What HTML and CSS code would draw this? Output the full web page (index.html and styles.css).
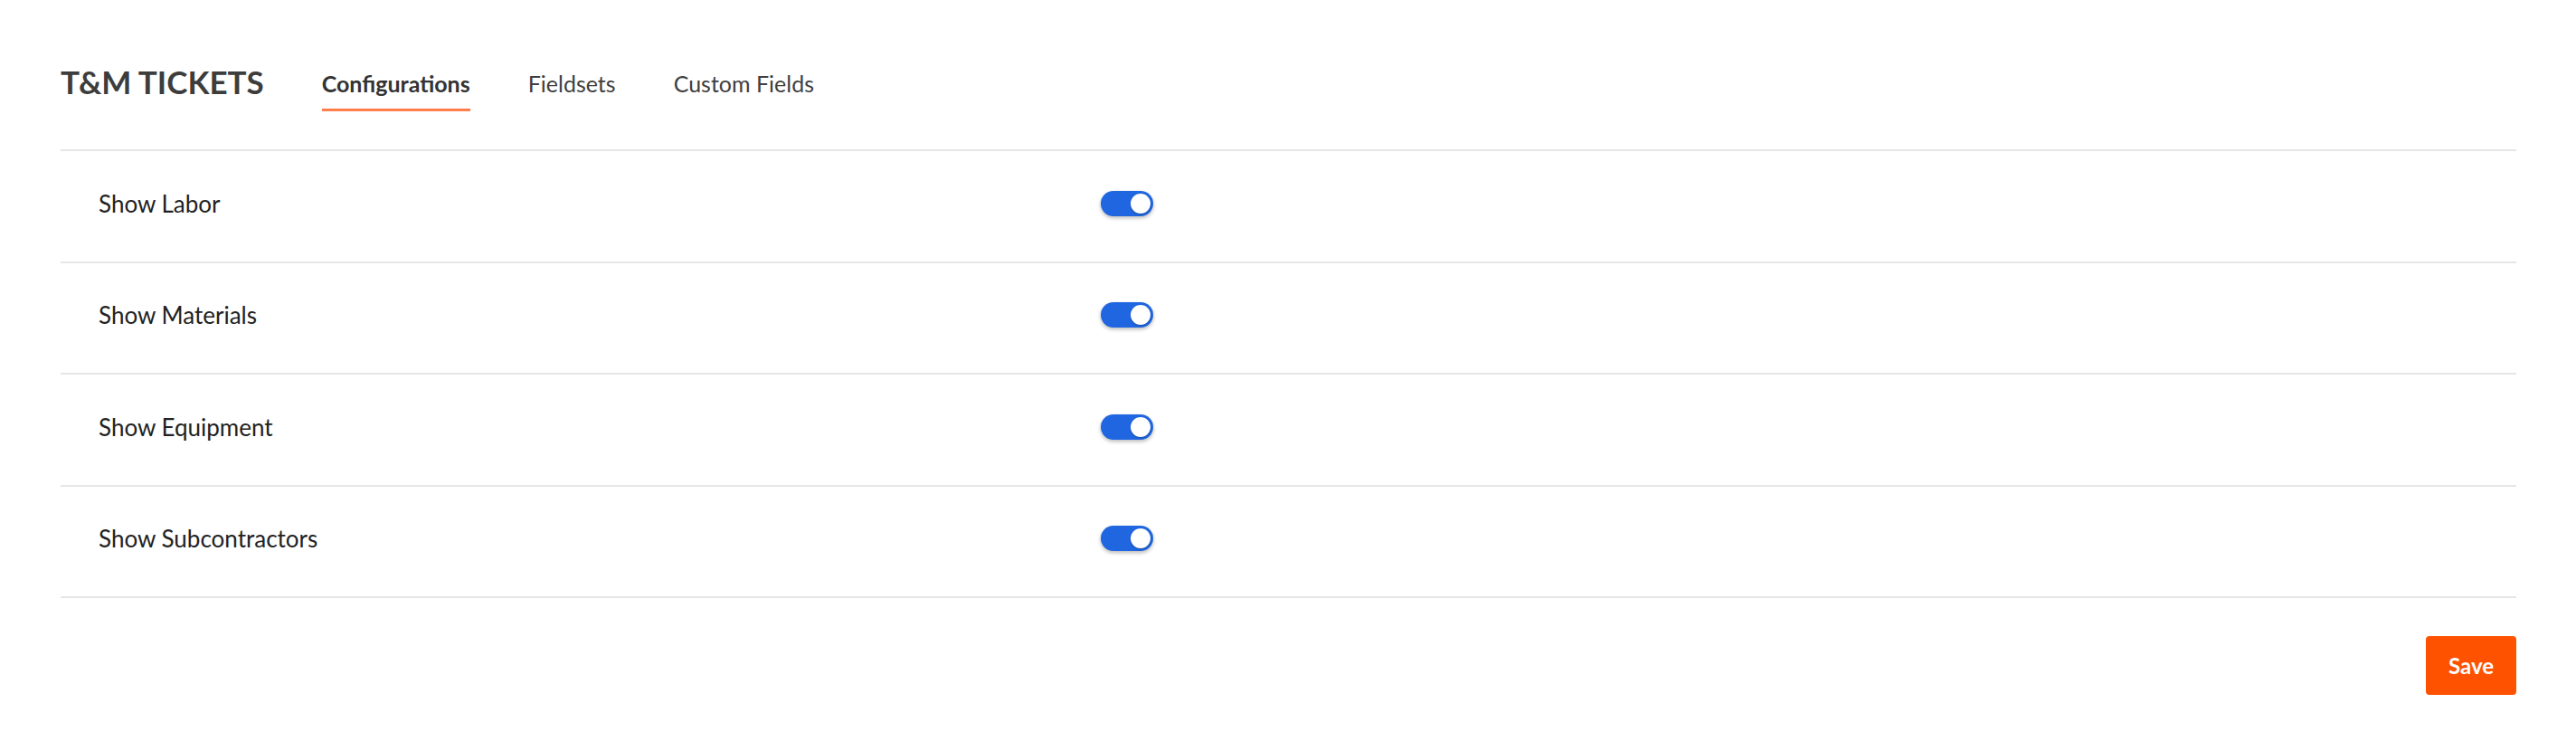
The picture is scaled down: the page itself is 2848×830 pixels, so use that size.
FILE: index.html
```html
<!DOCTYPE html>
<html>
<head>
	<meta charset="UTF-8">
	<title>T&amp;M Tickets</title>
	<link rel="stylesheet" href="styles.css">
</head>
<body>
	<div class="page">
		<div class="header">
			<h1 class="title">T&amp;M TICKETS</h1>
			<ul class="tabs">
				<li class="active">Configurations</li>
				<li>Fieldsets</li>
				<li>Custom Fields</li>
			</ul>
		</div>
		<ul class="settings">
			<li>
				<span class="label">Show Labor</span>
				<span class="switch on"><i></i></span>
			</li>
			<li>
				<span class="label">Show Materials</span>
				<span class="switch on"><i></i></span>
			</li>
			<li>
				<span class="label">Show Equipment</span>
				<span class="switch on"><i></i></span>
			</li>
			<li>
				<span class="label">Show Subcontractors</span>
				<span class="switch on"><i></i></span>
			</li>
		</ul>
		<div class="actions">
			<button class="save">Save</button>
		</div>
	</div>
</body>
</html>
```

FILE: styles.css
```css
*{margin: 0;padding: 0;box-sizing: border-box;}
li{list-style-type: none;}
body{background: #FFFFFF;font-family: Lato, "Noto Sans", sans-serif;color: #222222;}
.page{padding: 0 66px 0 67px;}

/* 顶部标题和标签 */
.header{display: flex;align-items: flex-start;padding-top: 68px;padding-bottom: 42px;}
.title{font-size: 35px;line-height: 44px;font-weight: 700;color: #3d3d3d;margin-right: 64px;}
.tabs{display: flex;gap: 64px;margin-top: 8px;}
.tabs li{font-size: 25px;line-height: 32px;color: #404040;padding-bottom: 12px;border-bottom: 3px solid transparent;cursor: pointer;}
.tabs li.active{font-weight: 700;color: #333333;border-bottom-color: #ff7f4c;}

/* 设置列表 */
.settings{border-bottom: 2px solid #e6e6e6;}
.settings li{display: flex;align-items: center;height: 123.5px;border-top: 2px solid #e6e6e6;padding-left: 42px;padding-bottom: 6px;}
.settings .label{width: 1108px;font-size: 26px;line-height: 32px;color: #222222;}

.switch{display: block;width: 58px;height: 28px;border-radius: 14px;background: #c8c8c8;position: relative;box-shadow: 0 2px 4px rgba(0,0,0,.28);cursor: pointer;}
.switch.on{background: #1f66e0;}
.switch i{display: block;width: 22px;height: 22px;border-radius: 50%;background: #FFFFFF;position: absolute;top: 3px;left: 3px;box-shadow: 0 1px 2px rgba(0,0,0,.25);}
.switch.on i{left: auto;right: 3px;}

/* 保存 */
.actions{display: flex;justify-content: flex-end;padding-top: 42px;}
.save{height: 65px;padding: 0 25px;border: none;border-radius: 4px;background: #ff5200;color: #FFFFFF;font-family: Lato, "Noto Sans", sans-serif;font-size: 24px;font-weight: 700;cursor: pointer;}
```
